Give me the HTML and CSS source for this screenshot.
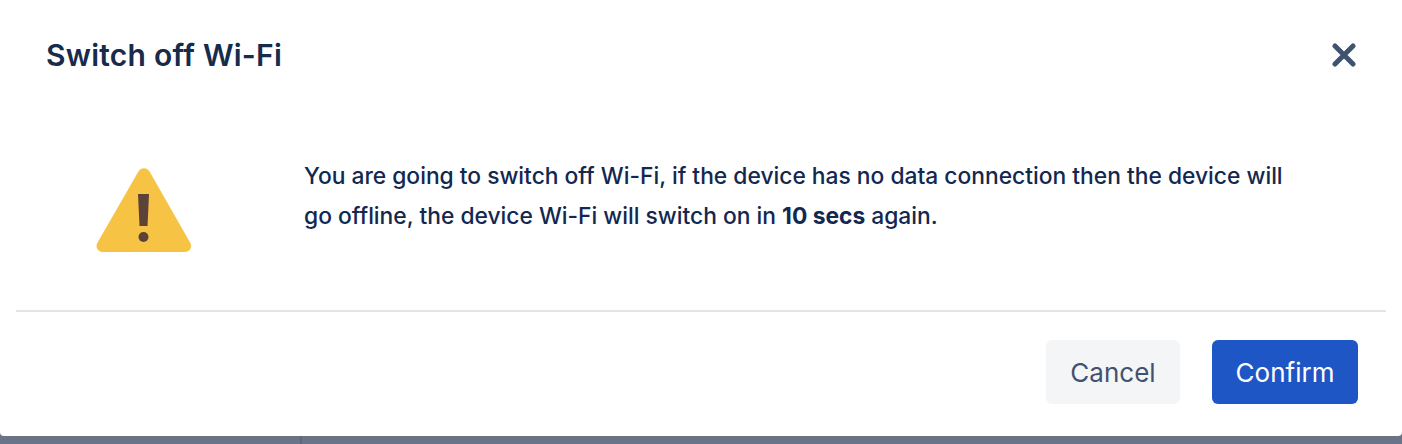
FILE: index.html
```html
<html>
  <head>
    <title>Switch off Wi-Fi</title>
    <link rel="stylesheet" href="styles.css">
  </head>
  <body>
    <div class="backdrop">
      <div class="backdrop-line"></div>
    </div>
    <div class="dialog">
      <header class="dialog-header">
        <h2 class="dialog-title">Switch off Wi-Fi</h2>
        <button class="close-button" aria-label="Close">
          <svg width="24" height="24" viewBox="0 0 24 24">
            <path d="M3 3 L21 21 M21 3 L3 21" stroke="#3f5270" stroke-width="5" stroke-linecap="round" fill="none"/>
          </svg>
        </button>
      </header>
      <div class="dialog-body">
        <div class="warning-icon">
          <svg width="98" height="86" viewBox="0 0 98 86">
            <path d="M43.6 3.2 C46 -0.9 52 -0.9 54.400 3.2 L95.200 74.800 C97.600 79 95 84 90 84 L8 84 C3 84 0 79 2.400 74.800 Z" fill="#f6c344"/>
            <path d="M43 26 L54 26 L52.500 58 L44.500 58 Z" fill="#5c4238"/>
            <circle cx="48.500" cy="69" r="5" fill="#5c4238"/>
          </svg>
        </div>
        <p class="dialog-text">You are going to switch off Wi-Fi, if the device has no data connection then the device will go offline, the device Wi-Fi will switch on in <strong>10 secs</strong> again.</p>
      </div>
      <footer class="dialog-footer">
        <button class="btn btn-cancel">Cancel</button>
        <button class="btn btn-confirm">Confirm</button>
      </footer>
    </div>
  </body>
</html>
```

FILE: styles.css
```css
* {
  box-sizing: border-box;
}

html, body {
  height: 100%;
}

body {
  background: #6b7486;
  display: flex;
  flex-direction: column;
  font-family: Inter, sans-serif;
  height: 444px;
  margin: 0;
  overflow: hidden;
  position: relative;
}

.backdrop {
  bottom: 0;
  height: 8px;
  left: 0;
  position: absolute;
  right: 0;
}

.backdrop-line {
  background: #5f687b;
  height: 8px;
  margin-left: 300px;
  width: 2px;
}

.dialog {
  background: #ffffff;
  border-radius: 0 0 4px 4px;
  display: flex;
  flex-direction: column;
  height: 436px;
  position: relative;
}

.dialog-header {
  align-items: center;
  display: flex;
  height: 110px;
  justify-content: space-between;
  padding: 0 46px 0 46px;
}

.dialog-title {
  color: #172b4d;
  font-size: 30px;
  font-weight: 600;
  letter-spacing: 0.25px;
  margin: 0;
}

.close-button {
  background: none;
  border: 0;
  display: flex;
  padding: 0;
}

.dialog-body {
  align-items: center;
  display: flex;
  height: 200px;
  padding: 2px 46px 0;
}

.warning-icon {
  display: flex;
  justify-content: center;
  margin-left: 49px;
  width: 98px;
}

.dialog-text {
  color: #132850;
  font-size: 22.8px;
  font-weight: 500;
  line-height: 40px;
  margin: 0 0 30px 111px;
  width: 1000px;
}

.dialog-text strong {
  font-weight: 700;
}

.dialog-footer {
  border-top: 2px solid #e2e4e9;
  display: flex;
  gap: 32px;
  justify-content: flex-end;
  margin: 0 16px;
  padding: 28px 28px 0 0;
}

.btn {
  border: 0;
  border-radius: 6px;
  font-family: Inter, sans-serif;
  font-size: 26px;
  height: 64px;
}

.btn-cancel {
  background: #f4f5f7;
  color: #42526e;
  width: 134px;
}

.btn-confirm {
  background: #1e56c6;
  color: #ffffff;
  width: 146px;
}
```
